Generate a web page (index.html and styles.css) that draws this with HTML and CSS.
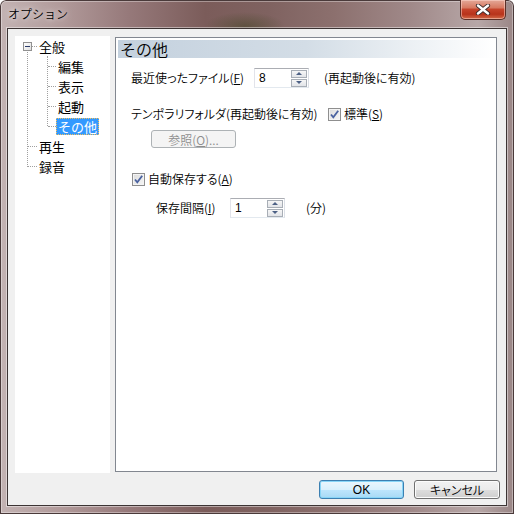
FILE: index.html
```html
<!DOCTYPE html>
<html lang="ja">
<head>
<meta charset="utf-8">
<title>オプション</title>
<link rel="stylesheet" href="styles.css">
</head>
<body>
<div class="window">
  <div class="titlebar">
    <span class="title">オプション</span>
    <div class="close">
      <svg width="16" height="11" viewBox="0 0 16 11">
        <path d="M3 1.5 L13 9.5 M13 1.5 L3 9.5" stroke="#3a2a2a" stroke-width="4.2" stroke-linecap="round"/>
        <path d="M3 1.5 L13 9.5 M13 1.5 L3 9.5" stroke="#ffffff" stroke-width="2.4" stroke-linecap="round"/>
      </svg>
    </div>
  </div>
  <div class="client">
    <div class="main">
      <div class="tree">
        <div class="root-group">
          <div class="row root">
            <span class="expander"><span class="minus"></span></span>
            <span class="hline short"></span>
            <span class="label">全般</span>
          </div>
          <div class="children">
            <div class="row child"><span class="hline child-line"></span><span class="label">編集</span></div>
            <div class="row child"><span class="hline child-line"></span><span class="label">表示</span></div>
            <div class="row child"><span class="hline child-line"></span><span class="label">起動</span></div>
            <div class="row child"><span class="hline child-line"></span><span class="label selected">その他</span></div>
          </div>
          <div class="row leaf"><span class="hline leaf-line"></span><span class="label">再生</span></div>
          <div class="row leaf"><span class="hline leaf-line"></span><span class="label">録音</span></div>
        </div>
      </div>
      <div class="panel">
        <div class="header">その他</div>
        <div class="line line1">
          <span class="lbl w1">最近使ったファイル(<u>F</u>)</span>
          <div class="spin">
            <span class="value">8</span>
            <div class="spin-btns">
              <span class="sbtn"><span class="arrow up"></span></span>
              <span class="sbtn"><span class="arrow down"></span></span>
            </div>
          </div>
          <span class="lbl note">(再起動後に有効)</span>
        </div>
        <div class="line line2">
          <span class="lbl w2">テンポラリフォルダ(再起動後に有効)</span>
          <span class="check"><svg width="11" height="11" viewBox="0 0 11 11"><path d="M2 5.5 L4.3 8.3 L9.2 1.8" fill="none" stroke="#4a62a0" stroke-width="1.8"/></svg></span>
          <span class="lbl chk-lbl">標準(<u>S</u>)</span>
        </div>
        <div class="line line3">
          <span class="btn disabled">参照(<u>O</u>)...</span>
        </div>
        <div class="line line4">
          <span class="check"><svg width="11" height="11" viewBox="0 0 11 11"><path d="M2 5.5 L4.3 8.3 L9.2 1.8" fill="none" stroke="#4a62a0" stroke-width="1.8"/></svg></span>
          <span class="lbl chk-lbl">自動保存する(<u>A</u>)</span>
        </div>
        <div class="line line5">
          <span class="lbl w3">保存間隔(<u>I</u>)</span>
          <div class="spin">
            <span class="value">1</span>
            <div class="spin-btns">
              <span class="sbtn"><span class="arrow up"></span></span>
              <span class="sbtn"><span class="arrow down"></span></span>
            </div>
          </div>
          <span class="lbl unit">(分)</span>
        </div>
      </div>
    </div>
    <div class="buttons">
      <span class="btn ok">OK</span>
      <span class="btn cancel">キャンセル</span>
    </div>
  </div>
</div>
</body>
</html>
```
FILE: styles.css
```css
* { box-sizing: border-box; }
html, body { margin: 0; padding: 0; }
body {
  width: 514px;
  height: 514px;
  overflow: hidden;
  font-family: "Noto Sans CJK JP", "Noto Sans", sans-serif;
  font-size: 12px;
  font-weight: 350;
  color: #000;
}
.window {
  width: 514px;
  height: 514px;
  padding: 0 7px 8px 7px;
  display: flex;
  flex-direction: column;
  background:
    radial-gradient(ellipse 40px 14px at 245px 26px, rgba(70,70,40,0.55), rgba(70,70,40,0) 100%),
    linear-gradient(90deg, #c3b3b3 0%, #b19a9a 12%, #96797a 25%, #7b5c5a 40%, #7f6260 52%, #8c706e 65%, #a08989 80%, #b7a7a7 93%, #9a8686 100%);
  border-radius: 6px 6px 0 0;
  box-shadow: inset 0 0 0 1px #4a3a3a, inset 0 0 0 2px rgba(255,255,255,0.35);
}
.titlebar {
  height: 28px;
  margin: 0 -7px;
  padding-left: 8px;
  padding-right: 8px;
  display: flex;
  align-items: flex-start;
  justify-content: space-between;
}
.title {
  margin-top: 6px;
  font-size: 12px;
  line-height: 16px;
  color: #000;
  text-shadow: 0 0 8px rgba(255,255,255,0.8), 0 0 4px rgba(255,255,255,0.6);
}
.close {
  width: 46px;
  height: 20px;
  border: 1px solid #5b3028;
  border-top: none;
  border-radius: 0 0 5px 5px;
  background: linear-gradient(180deg, #e4a898 0%, #d77a62 40%, #c5432a 50%, #b8331b 75%, #d26a48 100%);
  box-shadow: inset 0 0 0 1px rgba(255,220,210,0.5);
  display: flex;
  align-items: center;
  justify-content: center;
}
.client {
  flex: 1;
  background: #f0f0f0;
  border: 1px solid #3c3434;
  box-shadow: 0 0 0 1px rgba(255,255,255,0.45);
  padding: 7px 6px 6px 7px;
  display: flex;
  flex-direction: column;
  gap: 7px;
}
.main {
  height: 437px;
  display: flex;
  gap: 5px;
}
.tree {
  width: 95px;
  height: 437px;
  background: #fff;
}
.root-group {
  position: relative;
}
.root-group::before {
  content: "";
  position: absolute;
  left: 12px;
  top: 14px;
  height: 117px;
  border-left: 1px dotted #a0a0a0;
}
.children {
  position: relative;
}
.children::before {
  content: "";
  position: absolute;
  left: 32px;
  top: 0;
  height: 70px;
  border-left: 1px dotted #a0a0a0;
}
.row {
  height: 20px;
  display: flex;
  align-items: center;
  font-size: 13px;
  font-weight: 400;
  position: relative;
}
.row.root { padding-left: 8px; }
.expander {
  width: 9px;
  height: 9px;
  border: 1px solid #919191;
  background: linear-gradient(135deg, #ffffff, #e0e0e0);
  display: flex;
  align-items: center;
  justify-content: center;
  position: relative;
  z-index: 1;
}
.minus {
  width: 5px;
  height: 1px;
  background: #2b3b6b;
}
.hline {
  height: 0;
  border-top: 1px dotted #a0a0a0;
}
.hline.short { width: 5px; margin-left: 0; }
.hline.leaf-line { width: 9px; margin-left: 13px; }
.hline.child-line { width: 8px; margin-left: 33px; }
.label {
  padding: 0 2px;
  line-height: 17px;
  height: 17px;
  white-space: nowrap;
}
.label.selected {
  background: #3399ff;
  color: #fff;
  outline: 1px dotted #f0c060;
  outline-offset: -1px;
}
.panel {
  margin-top: 1px;
  margin-right: 3px;
  height: 435px;
  flex: 1;
  background: #fff;
  border: 1px solid #828790;
  padding: 2px 2px 2px 2px;
}
.header {
  height: 18px;
  line-height: 18px;
  font-size: 16px;
  padding-left: 2px;
  background: linear-gradient(90deg, #c4d1de 0%, #d3dde6 50%, #ffffff 100%);
  color: #000;
}
.line {
  display: flex;
  align-items: center;
  font-feature-settings: "palt";
}
.lbl { white-space: nowrap; line-height: 16px; }
.line1 { margin-top: 10px; height: 20px; padding-left: 13px; }
.w1 { width: 123px; }
.note { margin-left: 15px; }
.line2 { margin-top: 18px; height: 16px; padding-left: 13px; }
.w2 { width: 197px; }
.check {
  width: 13px;
  height: 13px;
  border: 1px solid #8f8f8f;
  background: linear-gradient(135deg, #dcdcdc, #f6f6f6);
  box-shadow: inset 0 0 0 1px #f4f4f4;
  display: flex;
  align-items: center;
  justify-content: center;
  flex: none;
}
.chk-lbl { margin-left: 3px; }
.line3 { margin-top: 8px; padding-left: 33px; }
.btn {
  display: flex;
  align-items: center;
  justify-content: center;
  height: 18px;
  border-radius: 3px;
  font-size: 12px;
  white-space: nowrap;
}
.btn.disabled {
  width: 85px;
  height: 18px;
  border: 1px solid #adb2b5;
  background: #f4f4f4;
  color: #8d8d8d;
}
.line4 { margin-top: 24px; padding-left: 14px; height: 14px; }
.line5 { margin-top: 12px; height: 20px; padding-left: 38px; }
.w3 { width: 74px; }
.unit { margin-left: 21px; }
.spin {
  width: 55px;
  height: 20px;
  border: 1px solid #abadb3;
  border-color: #abadb3 #dbdfe6 #e3e9ef #e2e3ea;
  display: flex;
  align-items: center;
  justify-content: space-between;
  padding: 0 1px 0 4px;
  background: #fff;
}
.value {
  font-family: "Liberation Sans", "Noto Sans", sans-serif;
  font-size: 12px;
  font-weight: 400;
}
.spin-btns {
  display: flex;
  flex-direction: column;
  gap: 1px;
}
.sbtn {
  width: 16px;
  height: 8px;
  border: 1px solid #a8aeb6;
  background: linear-gradient(180deg, #f6f6f6, #e2e4e8);
  display: flex;
  align-items: center;
  justify-content: center;
}
.arrow { width: 0; height: 0; border-left: 3px solid transparent; border-right: 3px solid transparent; }
.arrow.up { border-bottom: 3px solid #4d6185; }
.arrow.down { border-top: 3px solid #4d6185; }
.buttons {
  height: 19px;
  display: flex;
  justify-content: flex-end;
  gap: 10px;
}
.btn.ok {
  width: 85px;
  height: 19px;
  border: 1px solid #3c7fb1;
  background: linear-gradient(180deg, #eaf6fd 0%, #d9f0fc 50%, #bee6fd 51%, #a7d9f5 100%);
  box-shadow: inset 0 0 0 1px #88d5f7;
  font-family: "Liberation Sans", "Noto Sans", sans-serif;
  font-weight: 400;
}
.btn.cancel {
  width: 86px;
  height: 19px;
  border: 1px solid #707070;
  background: linear-gradient(180deg, #f2f2f2 0%, #ebebeb 50%, #dddddd 51%, #cfcfcf 100%);
  box-shadow: inset 0 0 0 1px #fcfcfc;
  font-feature-settings: "palt";
}
```
